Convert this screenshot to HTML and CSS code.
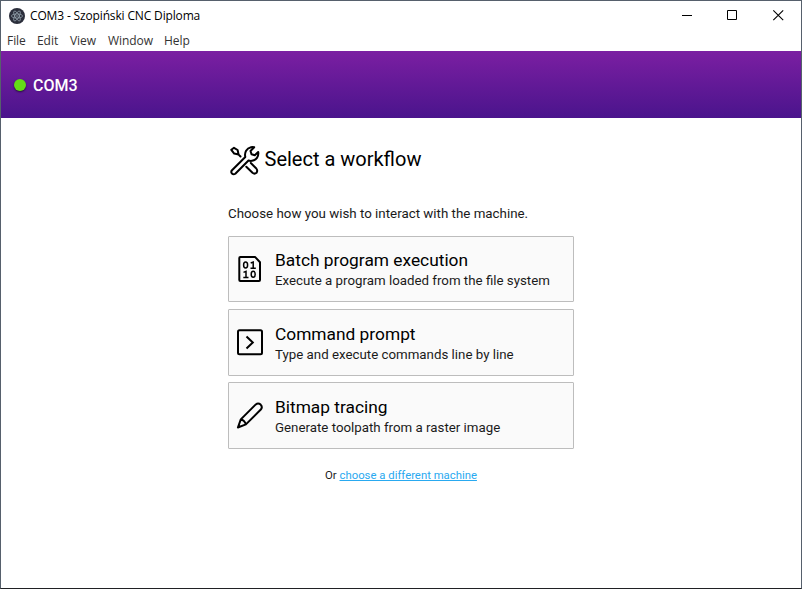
FILE: index.html
```html
<!DOCTYPE html>
<html lang="en">
<head>
<meta charset="utf-8">
<title>COM3 - Szopiński CNC Diploma</title>
<link rel="stylesheet" href="styles.css">
</head>
<body>
<div class="window">
  <div class="titlebar">
    <svg class="app-icon" viewBox="0 0 16 16" width="16" height="16">
      <circle cx="8" cy="8" r="8" fill="#2b2e3b"/>
      <g fill="none" stroke="#a9bac4" stroke-width=".6">
        <ellipse cx="8" cy="8" rx="5.600" ry="2.100"/>
        <ellipse cx="8" cy="8" rx="5.600" ry="2.100" transform="rotate(60 8 8)"/>
        <ellipse cx="8" cy="8" rx="5.600" ry="2.100" transform="rotate(120 8 8)"/>
      </g>
      <circle cx="8" cy="8" r=".7" fill="#a9bac4"/>
    </svg>
    <span class="title">COM3 - Szopiński CNC Diploma</span>
    <svg class="controls" viewBox="0 0 138 29" width="138" height="29" fill="none" stroke="#000">
      <path d="M19 14.500h10M64.500 9.500h9v9h-9z"/>
      <path d="M110.300 9.300l9.900 9.900M120.200 9.300l-9.900 9.900" stroke-width="1.100"/>
    </svg>
  </div>
  <nav class="menu">
    <span class="m-file">File</span><span class="m-edit">Edit</span><span class="m-view">View</span><span class="m-window">Window</span><span class="m-help">Help</span>
  </nav>
  <header class="header"><i class="status"></i><span>COM3</span></header>
  <main class="content">
    <h1 class="heading">
      <svg viewBox="0 0 32 32" width="32" height="32" fill="none" stroke="#000" stroke-width="2" stroke-linejoin="round" stroke-linecap="round">
        <path d="M4 26.300L17.300 13C16.200 8.500 18.600 4.200 23 3.200C24.200 2.900 25.300 3 26.200 3.300L22.500 7L23.500 10.300L26.800 11.300L30.200 8C31 12.500 28.200 16.200 24 16.800C22.800 17 21.500 16.900 20.500 16.500L7.300 29.700Q5.500 31 3.900 29.500Q2.600 27.800 4 26.300Z"/>
        <path d="M3.300 5.800L6 3.800L9.600 6L10.600 10.600L6.200 9.600Z M10.600 10.600L12.500 12.500M22.800 19L28.300 24.500Q30 26.700 28.500 28.800Q26.500 30.500 24.500 28.800L18.300 22.800"/>
      </svg>
      <span>Select a workflow</span>
    </h1>
    <p class="intro">Choose how you wish to interact with the machine.</p>
    <div class="cards">
      <div class="card">
        <svg viewBox="0 0 28 28" width="28" height="28" fill="none" stroke="#000" stroke-width="2" stroke-linejoin="round">
          <path d="M4.300 1.900h14.700l5 5.300v17.900q0 1-1 1H4.300q-1 0-1-1V2.900q0-1 1-1z"/>
          <g stroke-width="1.500" stroke-linejoin="miter"><ellipse cx="9.600" cy="10" rx="2" ry="3"/><path d="M14.700 8l2.500-1v6.500M14.500 13.200h5.300M7.500 17.400l2.500-1v6.500M7.300 22.500h5.200"/><ellipse cx="17.200" cy="19.300" rx="2" ry="3"/></g>
        </svg>
        <div class="card-text"><h2>Batch program execution</h2><p>Execute a program loaded from the file system</p></div>
      </div>
      <div class="card">
        <svg viewBox="0 0 28 28" width="28" height="28" fill="none" stroke="#000" stroke-width="2">
          <rect x="2" y="2.300" width="24" height="24" rx="1.500"/><path d="M10.500 8.500l6.300 6-6.300 6"/>
        </svg>
        <div class="card-text lower"><h2>Command prompt</h2><p>Type and execute commands line by line</p></div>
      </div>
      <div class="card">
        <svg viewBox="0 0 28 28" width="28" height="28" fill="none" stroke="#000" stroke-width="2" stroke-linejoin="round">
          <g transform="translate(0 -1)"><path d="M1.900 26.500L4.800 18.400L19.800 3.400Q22.200 1.400 24.600 3.600Q26.900 6 24.800 8.500L9.900 23.400ZM4.800 18.400Q8.500 19 9.900 23.400"/><path d="M1.500 27l1.300-3.500 2.300 2.100z" fill="#000" stroke="none"/></g>
        </svg>
        <div class="card-text lower"><h2>Bitmap tracing</h2><p>Generate toolpath from a raster image</p></div>
      </div>
    </div>
    <p class="other">Or <a>choose a different machine</a></p>
  </main>
</div>
</body>
</html>
```

FILE: styles.css
```css
* { box-sizing: border-box; }
body, h1, h2, p { margin: 0; font-weight: 400; }
body { font-family: Roboto, "Liberation Sans", sans-serif; color: #1a1a1a; background: #fff; overflow: hidden; }
.window { height: 589px; border: 1px solid #56606c; border-bottom-color: #202124; display: flex; flex-direction: column; }
.titlebar { height: 29px; display: flex; align-items: center; padding-left: 8px; font: 12px/16px "Open Sans", sans-serif; color: #000; }
.app-icon { margin-right: 5px; }
.title { letter-spacing: -.15px; white-space: nowrap; }
.controls { margin-left: auto; }
.menu { height: 21px; display: flex; padding: 3px 0 0 6px; font: 12px/16px "Open Sans", sans-serif; color: #333; letter-spacing: -.05px; }
.menu span { white-space: nowrap; }
.m-file { width: 30px; }
.m-edit { width: 33px; }
.m-view { width: 38px; }
.m-window { width: 56px; }
.header { height: 67px; flex: none; display: flex; align-items: center; padding: 1px 0 0 13px; background: linear-gradient(#7b1fa2, #4a148c); color: #fff; font-size: 16px; font-weight: 500; }
.status { width: 12px; height: 12px; border-radius: 50%; background: #64dd17; box-shadow: 0 1px 2px rgba(0,0,0,.6); margin-right: 7px; }
.content { width: 346px; margin: 26px 0 0 227px; }
.heading { display: flex; align-items: center; height: 32px; font-size: 20px; color: #000; }
.heading svg { margin-right: 4.5px; }
.heading span { padding-bottom: 2px; }
.intro { margin-top: 28px; font-size: 13.33px; line-height: 20px; white-space: nowrap; }
.cards { margin-top: 12px; display: grid; gap: 6.8px; }
.card { height: 66.4px; display: flex; align-items: center; padding-left: 7px; border: 1px solid #bdbdbd; border-radius: 1px; background: #fafafa; }
.card-text { margin-left: 11px; white-space: nowrap; }
.card-text.lower { padding-top: 1.6px; }
.card h2 { font-size: 17.33px; line-height: 22px; color: #000; }
.card p { font-size: 13.3px; line-height: 19px; }
.other { margin-top: 18px; font-size: 11.33px; line-height: 17px; text-align: center; }
.other a { color: #29a9f0; text-decoration: underline; }
```
